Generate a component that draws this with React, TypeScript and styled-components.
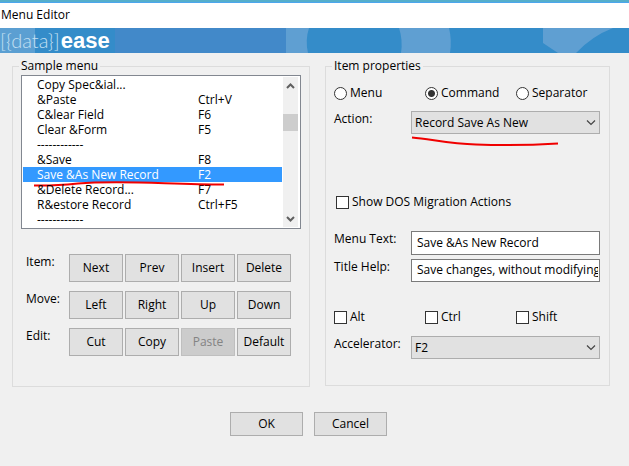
import React, { useState } from "react";
import styled, { createGlobalStyle } from "styled-components";

const GlobalStyle = createGlobalStyle`
  * { box-sizing: border-box; }
  body {
    margin: 0;
    background: #f0f0f0;
    color: #000;
    font: 12px/16px "Open Sans", "Noto Sans", sans-serif;
  }
  button, input, select { font: inherit; color: inherit; margin: 0; }
`;

const Dialog = styled.main`
  min-height: 100vh;
  background: #f0f0f0;
`;

const TopEdge = styled.div`
  height: 3px;
  background: #55aecb;
  border-bottom: 1px solid #4ba6ee;
`;

const TitleBar = styled.h1`
  margin: 0;
  height: 25px;
  padding: 0 1px;
  background: #fff;
  font-size: 12px;
  font-weight: 400;
  line-height: 24px;
`;

const Banner = styled.header`
  position: relative;
  height: 25px;
  overflow: hidden;
  background: #348cc9;
`;

const BannerArt = styled.svg`
  position: absolute;
  inset: 0;
  width: 100%;
  height: 100%;
`;

const Logo = styled.div`
  position: relative;
  display: flex;
  align-items: baseline;
  gap: 1px;
  color: #fff;
  line-height: 25px;
`;

const LogoThin = styled.span`
  font-family: Lato, sans-serif;
  font-weight: 300;
  font-size: 20px;
  color: #c4e0f3;
`;

const LogoBold = styled.strong`
  font-family: "Liberation Sans", sans-serif;
  font-size: 22px;
`;

const Groups = styled.div`
  display: grid;
  grid-template-columns: 298fr 285fr;
  gap: 15px;
  align-items: start;
  padding: 5px 19px 0 12px;
`;

const Group = styled.fieldset<{ $bottom: number }>`
  min-width: 0;
  margin: 0;
  padding: 0 9px ${(p) => p.$bottom}px 8px;
  border: 1px solid #dcdcdc;
`;

const Legend = styled.legend`
  margin-left: -2px;
  padding: 0 2px;
`;

const ListBox = styled.div`
  display: flex;
  margin: 1px -1px 0 0;
  padding: 1px;
  background: #fff;
  border: 1px solid #828790;
`;

const Items = styled.ul`
  flex: 1;
  margin: 0;
  padding: 0;
  list-style: none;
`;

const Item = styled.li<{ $selected: boolean }>`
  display: grid;
  grid-template-columns: 161fr 84fr;
  height: 15px;
  padding-left: 14px;
  line-height: 15px;
  white-space: nowrap;
  color: ${(p) => (p.$selected ? "#fff" : "#000")};
  background: ${(p) => (p.$selected ? "#3399ff" : "transparent")};
`;

const ScrollBar = styled.div`
  display: flex;
  flex-direction: column;
  width: 15px;
  margin: 0 1px;
  background: #f0f0f0;
`;

const ScrollButton = styled.button`
  display: flex;
  align-items: center;
  justify-content: center;
  height: 17px;
  padding: 0;
  border: 0;
  background: none;
`;

const Track = styled.div`
  flex: 1;
  padding-top: 20px;
`;

const Thumb = styled.div`
  height: 17px;
  background: #cdcdcd;
`;

const Commands = styled.div`
  display: grid;
  gap: 9px;
  padding: 25px 9px 0 5px;
`;

const CommandRow = styled.div`
  display: grid;
  grid-template-columns: 41px repeat(4, 1fr);
  column-gap: 2px;
`;

const Button = styled.button<{ $tall?: boolean }>`
  height: ${(p) => (p.$tall ? 28 : 24)}px;
  min-width: 0;
  padding: 0;
  background: #e1e1e1;
  border: 1px solid #adadad;
  &:disabled {
    background: #cccccc;
    border-color: #bfbfbf;
    color: #838383;
  }
`;

const Choices = styled.div<{ $top: number }>`
  display: grid;
  grid-template-columns: 91fr 91fr 84fr;
  padding-top: ${(p) => p.$top}px;
`;

const Choice = styled.label`
  display: flex;
  align-items: center;
  gap: 3px;
  white-space: nowrap;
`;

const Radio = styled.input`
  appearance: none;
  width: 13px;
  height: 13px;
  border: 1px solid #333;
  border-radius: 50%;
  background: #fff;
  &:checked {
    background: radial-gradient(circle, #333 3px, #fff 4px);
  }
`;

const Check = styled.input`
  appearance: none;
  width: 13px;
  height: 13px;
  border: 1px solid #333;
  background: #fff;
  &:checked {
    box-shadow: inset 0 0 0 2px #fff;
    background: #333;
  }
`;

const Wide = styled.div`
  padding: 60px 2px 21px;
`;

const Field = styled.div<{ $top: number }>`
  display: grid;
  grid-template-columns: 77px 1fr;
  padding-top: ${(p) => p.$top}px;
`;

const FieldBox = styled.div`
  position: relative;
  display: flex;
  min-width: 0;
`;

const Select = styled.select`
  appearance: none;
  width: 100%;
  height: 23px;
  padding: 0 20px 0 3px;
  border: 1px solid #adadad;
  border-radius: 0;
  background: #e1e1e1;
`;

const Chevron = styled.svg`
  position: absolute;
  right: 4px;
  top: 9px;
  pointer-events: none;
`;

const TextInput = styled.input<{ $height: number }>`
  width: 100%;
  height: ${(p) => p.$height}px;
  padding: 0 1px 2px 5px;
  border: 1px solid #7a7a7a;
  background: #fff;
`;

const Mark = styled.svg`
  position: absolute;
  pointer-events: none;
`;

const ListMark = styled(Mark)`
  left: -4px;
  top: 13px;
`;

const ActionMark = styled(Mark)`
  left: 0;
  top: 25px;
`;

const ItemName = styled.span`
  position: relative;
`;

const Footer = styled.footer`
  display: flex;
  justify-content: center;
  gap: 11px;
  padding: 25px 12px 30px 0;
  ${Button} { width: 73px; }
`;

const menu: [string, string][] = [
  ["Copy Spec&ial...", ""],
  ["&Paste", "Ctrl+V"],
  ["C&lear Field", "F6"],
  ["Clear &Form", "F5"],
  ["------------", ""],
  ["&Save", "F8"],
  ["Save &As New Record", "F2"],
  ["&Delete Record...", "F7"],
  ["R&estore Record", "Ctrl+F5"],
  ["------------", ""],
];

const commands: [string, string[]][] = [
  ["Item:", ["Next", "Prev", "Insert", "Delete"]],
  ["Move:", ["Left", "Right", "Up", "Down"]],
  ["Edit:", ["Cut", "Copy", "Paste", "Default"]],
];

function Arrow({ down = false }: { down?: boolean }) {
  return (
    <svg width="9" height="6" viewBox="0 0 9 6" aria-hidden="true">
      <path d={down ? "M1 1L4.5 4.5L8 1" : "M1 5L4.5 1.5L8 5"} fill="none" stroke="#606060" strokeWidth="2" />
    </svg>
  );
}

function DropDown({ id, value }: { id: string; value: string }) {
  return (
    <>
      <Select id={id} defaultValue={value}>
        <option>{value}</option>
      </Select>
      <Chevron width="10" height="6" viewBox="0 0 10 6" aria-hidden="true">
        <path d="M1 0.5L5 4.5L9 0.5" fill="none" stroke="#444" strokeWidth="1.2" />
      </Chevron>
    </>
  );
}

export default function App() {
  const [selected, setSelected] = useState(6);
  return (
    <Dialog>
      <GlobalStyle />
      <TopEdge />
      <TitleBar>Menu Editor</TitleBar>
      <Banner>
        <BannerArt viewBox="0 0 629 25" preserveAspectRatio="none" aria-hidden="true">
          <rect width="35" height="25" fill="#5b9fd2" />
          <rect x="115" width="171" height="25" fill="#4289c9" />
          <path d="M286 0H309Q305 12 308 25H286Z" fill="#5f9fd2" />
          <path d="M399 0H449Q452 12 450 25H401Q403 12 399 0Z" fill="#5f9fd2" />
          <path d="M543 0H613Q592 8 576 25H558L543 15Z" fill="#5f9fd2" />
        </BannerArt>
        <Logo>
          <LogoThin>[&#123;data&#125;]</LogoThin>
          <LogoBold>ease</LogoBold>
        </Logo>
      </Banner>
      <Groups>
        <Group $bottom={30}>
          <Legend>Sample menu</Legend>
          <ListBox>
            <Items role="listbox" aria-label="Sample menu">
              {menu.map(([name, keys], i) => (
                <Item key={i} role="option" aria-selected={i === selected} $selected={i === selected} onClick={() => setSelected(i)}>
                  <ItemName>
                    {name}
                    {i === 6 && (
                      <ListMark width="192" height="8" viewBox="0 0 192 8" aria-hidden="true">
                        <path d="M1 5.5C18 6 30 5 45 3.5C85 0 130 4 191 4.5" fill="none" stroke="#f00000" strokeWidth="2" />
                      </ListMark>
                    )}
                  </ItemName>
                  <span>{keys}</span>
                </Item>
              ))}
            </Items>
            <ScrollBar>
              <ScrollButton type="button" aria-label="Scroll up"><Arrow /></ScrollButton>
              <Track><Thumb /></Track>
              <ScrollButton type="button" aria-label="Scroll down"><Arrow down /></ScrollButton>
            </ScrollBar>
          </ListBox>
          <Commands>
            {commands.map(([label, names]) => (
              <CommandRow key={label} role="group" aria-label={label}>
                <span>{label}</span>
                {names.map((name) => (
                  <Button key={name} type="button" $tall disabled={name === "Paste"}>{name}</Button>
                ))}
              </CommandRow>
            ))}
          </Commands>
        </Group>
        <Group $bottom={26}>
          <Legend>Item properties</Legend>
          <Choices $top={11}>
            {["Menu", "Command", "Separator"].map((name) => (
              <Choice key={name}>
                <Radio type="radio" name="kind" defaultChecked={name === "Command"} />
                {name}
              </Choice>
            ))}
          </Choices>
          <Field $top={10}>
            <label htmlFor="action">Action:</label>
            <FieldBox>
              <DropDown id="action" value="Record Save As New" />
              <ActionMark width="148" height="12" viewBox="0 0 148 12" aria-hidden="true">
                <path d="M1 1.5C20 3 38 8 65 8.5C92 9.5 122 9 147 7.5" fill="none" stroke="#f00000" strokeWidth="2" />
              </ActionMark>
            </FieldBox>
          </Field>
          <Wide>
            <Choice>
              <Check type="checkbox" />
              Show DOS Migration Actions
            </Choice>
          </Wide>
          <Field $top={0}>
            <label htmlFor="text">Menu Text:</label>
            <TextInput id="text" $height={24} defaultValue="Save &As New Record" />
          </Field>
          <Field $top={4}>
            <label htmlFor="help">Title Help:</label>
            <TextInput id="help" $height={23} defaultValue="Save changes, without modifying current record" />
          </Field>
          <Choices $top={27}>
            {["Alt", "Ctrl", "Shift"].map((name) => (
              <Choice key={name}>
                <Check type="checkbox" />
                {name}
              </Choice>
            ))}
          </Choices>
          <Field $top={11}>
            <label htmlFor="key">Accelerator:</label>
            <FieldBox>
              <DropDown id="key" value="F2" />
            </FieldBox>
          </Field>
        </Group>
      </Groups>
      <Footer>
        <Button type="button">OK</Button>
        <Button type="button">Cancel</Button>
      </Footer>
    </Dialog>
  );
}
